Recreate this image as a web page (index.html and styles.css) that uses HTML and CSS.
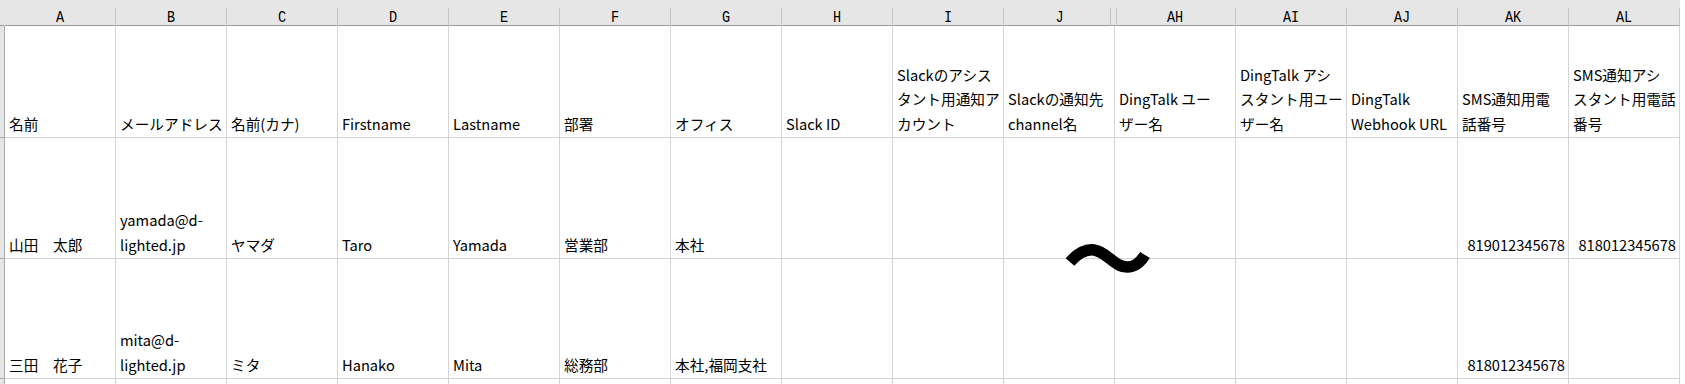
FILE: index.html
```html
<!DOCTYPE html>
<html lang="ja">
<head>
<meta charset="utf-8">
<title>Sheet</title>
<link rel="stylesheet" href="styles.css">
</head>
<body>
<div class="sheet">
  <div class="hdr">
    <div class="corner"></div>
    <div class="ch"><span>A</span></div>
    <div class="ch"><span>B</span></div>
    <div class="ch"><span>C</span></div>
    <div class="ch"><span>D</span></div>
    <div class="ch"><span>E</span></div>
    <div class="ch"><span>F</span></div>
    <div class="ch"><span>G</span></div>
    <div class="ch"><span>H</span></div>
    <div class="ch"><span>I</span></div>
    <div class="ch hidden-after"><span>J</span></div>
    <div class="ch"><span>AH</span></div>
    <div class="ch"><span>AI</span></div>
    <div class="ch"><span>AJ</span></div>
    <div class="ch"><span>AK</span></div>
    <div class="ch"><span>AL</span></div>
  </div>

  <div class="row r1">
    <div class="rh"></div>
    <div class="c"><span>名前</span></div>
    <div class="c"><span>メールアドレス</span></div>
    <div class="c"><span>名前(カナ)</span></div>
    <div class="c"><span>Firstname</span></div>
    <div class="c"><span>Lastname</span></div>
    <div class="c"><span>部署</span></div>
    <div class="c"><span>オフィス</span></div>
    <div class="c"><span>Slack ID</span></div>
    <div class="c"><span>Slackのアシス</span><span>タント用通知ア</span><span>カウント</span></div>
    <div class="c"><span>Slackの通知先</span><span>channel名</span></div>
    <div class="c"><span>DingTalk ユー</span><span>ザー名</span></div>
    <div class="c"><span>DingTalk アシ</span><span>スタント用ユー</span><span>ザー名</span></div>
    <div class="c"><span>DingTalk</span><span>Webhook URL</span></div>
    <div class="c"><span>SMS通知用電</span><span>話番号</span></div>
    <div class="c"><span>SMS通知アシ</span><span>スタント用電話</span><span>番号</span></div>
  </div>

  <div class="row r2">
    <div class="rh"></div>
    <div class="c"><span>山田　太郎</span></div>
    <div class="c"><span>yamada@d-</span><span>lighted.jp</span></div>
    <div class="c"><span>ヤマダ</span></div>
    <div class="c"><span>Taro</span></div>
    <div class="c"><span>Yamada</span></div>
    <div class="c"><span>営業部</span></div>
    <div class="c"><span>本社</span></div>
    <div class="c"></div>
    <div class="c"></div>
    <div class="c"></div>
    <div class="c"></div>
    <div class="c"></div>
    <div class="c"></div>
    <div class="c num"><span>819012345678</span></div>
    <div class="c num"><span>818012345678</span></div>
  </div>

  <div class="row r3">
    <div class="rh"></div>
    <div class="c"><span>三田　花子</span></div>
    <div class="c"><span>mita@d-</span><span>lighted.jp</span></div>
    <div class="c"><span>ミタ</span></div>
    <div class="c"><span>Hanako</span></div>
    <div class="c"><span>Mita</span></div>
    <div class="c"><span>総務部</span></div>
    <div class="c"><span>本社,福岡支社</span></div>
    <div class="c"></div>
    <div class="c"></div>
    <div class="c"></div>
    <div class="c"></div>
    <div class="c"></div>
    <div class="c"></div>
    <div class="c num"><span>818012345678</span></div>
    <div class="c"></div>
  </div>

  <div class="row r4">
    <div class="rh"></div>
    <div class="c"></div><div class="c"></div><div class="c"></div><div class="c"></div><div class="c"></div>
    <div class="c"></div><div class="c"></div><div class="c"></div><div class="c"></div><div class="c"></div>
    <div class="c"></div><div class="c"></div><div class="c"></div><div class="c"></div><div class="c"></div>
  </div>

  <svg class="tilde" width="1680" height="384" viewBox="0 0 1680 384" aria-hidden="true">
    <path d="M1070 262 C1078 253 1086 249 1094 250 C1103 251 1110 260 1119 265 C1127 269 1137 268 1145 255" fill="none" stroke="#000" stroke-width="11.5"/>
  </svg>
</div>
</body>
</html>
```

FILE: styles.css
```css
* { box-sizing: border-box; }

html, body {
  margin: 0;
  background: #ffffff;
}

body {
  font-family: "Noto Sans CJK JP", "Noto Sans", sans-serif;
  color: #000;
  overflow: hidden;
}

.sheet {
  position: relative;
  width: 1680px;
  height: 384px;
  overflow: hidden;
}

.hdr,
.row {
  display: grid;
  grid-template-columns: 5px repeat(10, 111px) 121px repeat(4, 111px);
}

.hdr {
  height: 26px;
  background: #e6e6e6;
  border-bottom: 1px solid #9b9b9b;
}

.corner {
  border-right: 1px solid #e6e6e6;
}

.ch {
  position: relative;
  margin-top: 8px;
  border-right: 1px solid #c6c6c6;
  display: flex;
  align-items: center;
  justify-content: center;
  font-family: "Liberation Mono", "DejaVu Sans Mono", monospace;
  font-size: 13.5px;
  line-height: 17px;
  color: #000;
}

.ch span {
  display: inline-block;
  transform: scaleY(1.25);
  margin-top: 1px;
}

.hidden-after {
  border-right: none;
}

.hidden-after::after {
  content: "";
  position: absolute;
  top: 0;
  bottom: 0;
  right: -2px;
  width: 5px;
  border-left: 1px solid #c6c6c6;
  border-right: 1px solid #c6c6c6;
}

.rh {
  background: #e6e6e6;
  border-right: 1px solid #ababab;
  border-bottom: 1px solid #ababab;
}

.c {
  display: flex;
  flex-direction: column;
  justify-content: flex-end;
  align-items: flex-start;
  padding: 0 3px 0 4px;
  border-right: 1px solid #d4d4d4;
  border-bottom: 1px solid #d4d4d4;
  font-size: 14.67px;
  line-height: 24.8px;
  white-space: nowrap;
  overflow: hidden;
}

.c.num {
  align-items: flex-end;
  padding-right: 3px;
}

.r1 { height: 112px; }
.r2 { height: 121px; }
.r3 { height: 120px; }
.r4 { height: 20px; }

.tilde {
  position: absolute;
  left: 0;
  top: 0;
  pointer-events: none;
}
```
